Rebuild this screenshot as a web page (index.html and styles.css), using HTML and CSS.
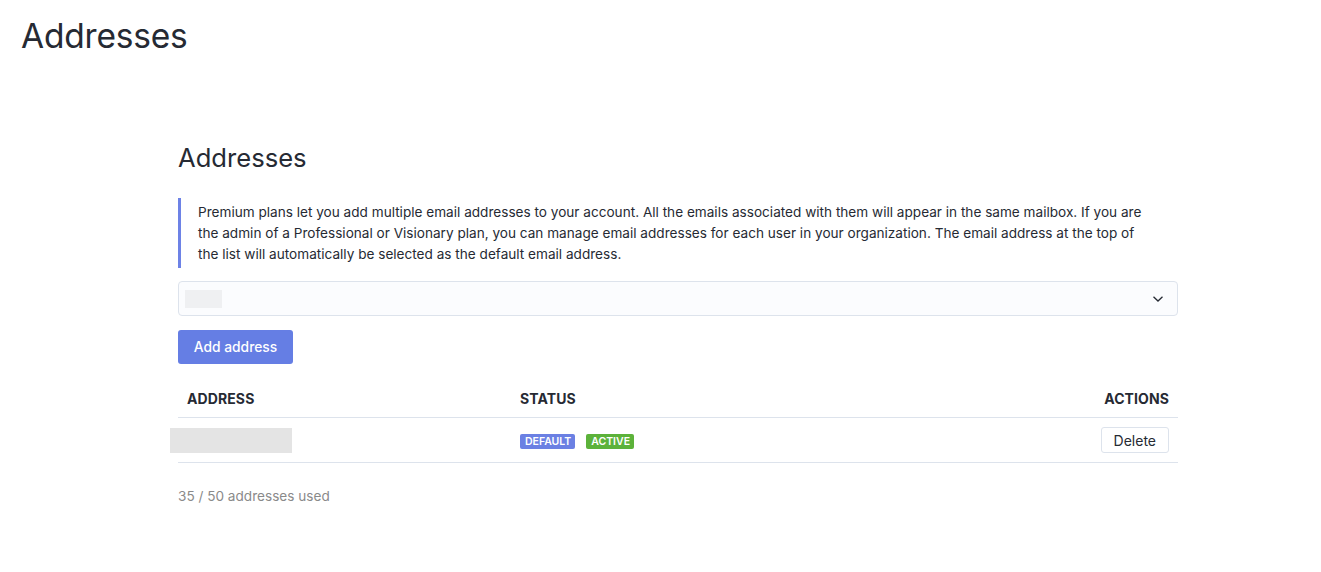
FILE: index.html
```html
<!DOCTYPE html>
<html lang="en">
<head>
<meta charset="utf-8">
<title>Addresses</title>
<link rel="stylesheet" href="styles.css">
</head>
<body>
<header class="page-header">
  <h1 class="page-title">Addresses</h1>
</header>
<main class="container">
  <section class="section">
    <h2 class="section-title">Addresses</h2>
    <div class="info">
      Premium plans let you add multiple email addresses to your account. All the emails associated with them will appear in the same mailbox. If you are the admin of a Professional or Visionary plan, you can manage email addresses for each user in your organization. The email address at the top of<br>the list will automatically be selected as the default email address.
    </div>
    <div class="select">
      <span class="select-value"></span>
      <svg class="chevron" width="12" height="8" viewBox="0 0 12 8"><path d="M1.5 1.8 L6 6 L10.5 1.8" fill="none" stroke="#262a33" stroke-width="1.3"/></svg>
    </div>
    <button class="btn-primary">Add address</button>
    <table class="table">
      <thead>
        <tr>
          <th class="col-address">Address</th>
          <th class="col-status">Status</th>
          <th class="col-actions">Actions</th>
        </tr>
      </thead>
      <tbody>
        <tr>
          <td class="col-address"><span class="redacted"></span></td>
          <td class="col-status"><span class="badge badge-default">Default</span><span class="badge badge-active">Active</span></td>
          <td class="col-actions"><button class="btn-small">Delete</button></td>
        </tr>
      </tbody>
    </table>
    <p class="usage">35 / 50 addresses used</p>
  </section>
</main>
</body>
</html>
```
FILE: styles.css
```css
* { box-sizing: border-box; }
html, body { margin: 0; padding: 0; background: #fff; }
body {
  font-family: Inter, "Noto Sans", "Liberation Sans", sans-serif;
  color: #262a33;
  font-size: 14px;
}
.page-header { padding: 16px 21px 0; height: 113px; }
.page-title {
  margin: 0;
  font-size: 33.5px;
  font-weight: 400;
  line-height: 40px;
  letter-spacing: -0.2px;
}
.container { padding: 0 143px 0 178px; }
.section { width: 1000px; padding-top: 30px; }
.section-title {
  margin: 0 0 25px;
  font-size: 25.6px;
  font-weight: 400;
  line-height: 30px;
}
.info {
  border-left: 3px solid #6d82e6;
  padding: 4px 14px 3px 17px;
  line-height: 21px;
  font-size: 13.6px;
  color: #262a33;
  margin-bottom: 13px;
}
.select {
  height: 35px;
  border: 1px solid #dde3ec;
  border-radius: 4px;
  background: #fbfcfe;
  display: flex;
  align-items: center;
  justify-content: space-between;
  padding: 0 13px 0 6px;
  margin-bottom: 14px;
}
.select-value { width: 37px; height: 18px; background: #eff0f2; }
.chevron { display: block; }
.btn-primary {
  display: block;
  height: 34px;
  width: 115px;
  border: 0;
  border-radius: 3px;
  background: #657ee4;
  color: #fff;
  font-family: inherit;
  font-size: 13.8px;
  font-weight: 500;
  padding: 0;
  margin-bottom: 20px;
}
.table { width: 100%; border-collapse: collapse; }
.table th {
  text-transform: uppercase;
  font-size: 14px;
  font-weight: 700;
  letter-spacing: 0.1px;
  text-align: left;
  padding: 6px 9px 10px;
  border-bottom: 1px solid #dde3ec;
  line-height: 17px;
}
.table td {
  height: 45px;
  padding: 0 9px;
  border-bottom: 1px solid #dde3ec;
  vertical-align: middle;
}
.col-address { width: 333px; }
.table th.col-actions, .table td.col-actions { text-align: right; }
.redacted {
  display: block;
  width: 122px;
  height: 25px;
  margin-left: -17px;
  background: #e4e4e4;
}
.badge {
  display: inline-block;
  height: 15px;
  line-height: 15px;
  font-size: 10.5px;
  font-weight: 600;
  text-transform: uppercase;
  color: #fff;
  padding: 0 4px 0 5px;
  border-radius: 2px;
  vertical-align: middle;
  margin-right: 11px;
}
.badge-default { background: #6b80e3; }
.badge-active { background: #5cb23a; }
.btn-small {
  height: 26px;
  padding: 0 12px;
  background: #fff;
  border: 1px solid #dde3ec;
  border-radius: 3px;
  font-family: inherit;
  font-size: 14px;
  color: #262a33;
}
.usage {
  margin: 25px 0 0;
  color: #8a8a8a;
  font-size: 13.6px;
}
```
